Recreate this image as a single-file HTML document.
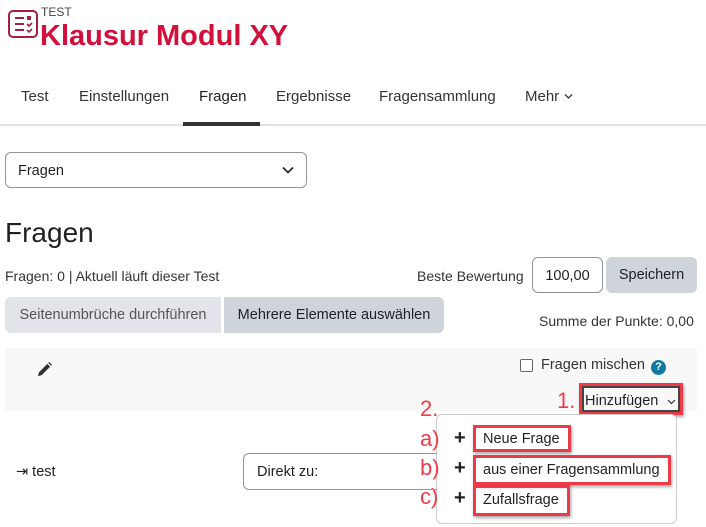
<!DOCTYPE html>
<html><head><meta charset="utf-8"><style>
*{box-sizing:border-box;margin:0;padding:0}
body{width:706px;height:527px;background:#fff;font-family:"Liberation Sans",sans-serif;color:#1d2125;position:relative;overflow:hidden;font-size:14px}
.a{position:absolute;white-space:nowrap}
.red{color:#f23b4a;font-size:22px}
.rb{position:absolute;border:3px solid #ec3b47;box-shadow:1px 2px 3px rgba(0,0,0,.35)}
.pl{position:absolute;font-size:20px;font-weight:bold;color:#222}
</style></head><body>
<svg class="a" style="left:8px;top:10px" width="30" height="28" viewBox="0 0 30 28"><rect x="1" y="1" width="28" height="26" rx="4" fill="none" stroke="#a3213f" stroke-width="2"/><g stroke="#a3213f" stroke-width="2"><line x1="7" y1="8" x2="16" y2="8"/><line x1="7" y1="14" x2="16" y2="14"/><line x1="7" y1="20" x2="16" y2="20"/></g><rect x="19" y="6" width="4" height="4" fill="#a3213f"/><path d="M19 14l2 2 3-3M19 20l2 2 3-3" stroke="#a3213f" stroke-width="1.6" fill="none"/></svg>
<div class="a" style="left:41px;top:5px;font-size:12px;color:#444">TEST</div>
<div class="a" style="left:40px;top:20px;font-size:29px;font-weight:bold;color:#d30f3c">Klausur Modul XY</div>
<div class="a" style="left:21px;top:88px;font-size:15px;color:#333">Test</div>
<div class="a" style="left:79px;top:88px;font-size:15px;color:#333">Einstellungen</div>
<div class="a" style="left:199px;top:88px;font-size:15px;color:#1d2125">Fragen</div>
<div class="a" style="left:276px;top:88px;font-size:15px;color:#333">Ergebnisse</div>
<div class="a" style="left:379px;top:88px;font-size:15px;color:#333">Fragensammlung</div>
<div class="a" style="left:525px;top:88px;font-size:15px;color:#333">Mehr</div>
<svg class="a" style="left:564px;top:93px" width="9" height="7"><path d="M1 1.5l3.5 3.5 3.5-3.5" stroke="#333" stroke-width="1.3" fill="none"/></svg>
<div class="a" style="left:0;top:124px;width:706px;height:2px;background:#dee2e6"></div>
<div class="a" style="left:183px;top:122px;width:77px;height:4px;background:#333"></div>
<div class="a" style="left:5px;top:152px;width:302px;height:36px;border:1px solid #8f959e;border-radius:6px"></div>
<div class="a" style="left:18px;top:163px;font-size:14.5px">Fragen</div>
<svg class="a" style="left:282px;top:166px" width="12" height="8"><path d="M1 1.5l5 5 5-5" stroke="#1d2125" stroke-width="1.6" fill="none"/></svg>
<div class="a" style="left:5px;top:217px;font-size:28px">Fragen</div>
<div class="a" style="left:5px;top:268px;font-size:14px;color:#333">Fragen: 0 | Aktuell läuft dieser Test</div>
<div class="a" style="left:417px;top:268px;font-size:14px;color:#333">Beste Bewertung</div>
<div class="a" style="left:532px;top:257px;width:71px;height:36px;border:1px solid #8f959e;border-radius:6px;text-align:center;line-height:36px;font-size:14.5px">100,00</div>
<div class="a" style="left:606px;top:257px;width:91px;height:36px;background:#ced4da;border-radius:6px;text-align:center;line-height:37px;font-size:14.5px">Speichern</div>
<div class="a" style="left:5px;top:297px;width:216px;height:36px;background:#e1e5e9;border-radius:6px 0 0 6px;text-align:center;line-height:37px;font-size:14.5px;color:#555">Seitenumbrüche durchführen</div>
<div class="a" style="left:224px;top:297px;width:220px;height:36px;background:#ced4da;border-radius:0 6px 6px 0;text-align:center;line-height:37px;font-size:14.5px">Mehrere Elemente auswählen</div>
<div class="a" style="left:539px;top:313px;font-size:14px;color:#333">Summe der Punkte: 0,00</div>
<div class="a" style="left:5px;top:348px;width:692px;height:63px;background:#f8f8f8"></div>
<svg class="a" style="left:37px;top:362px" width="15" height="15" viewBox="0 0 16 16"><path d="M1 15l1-4 9-9 3 3-9 9z M12 1l1-1 3 3-1 1z" fill="#333"/></svg>
<div class="a" style="left:520px;top:359px;width:13px;height:13px;border:1.5px solid #666;border-radius:2px;background:#fff"></div>
<div class="a" style="left:541px;top:357px;font-size:14.5px;color:#333">Fragen mischen</div>
<div class="a" style="left:651px;top:360px;width:15px;height:15px;border-radius:50%;background:#0f7aa0;color:#fff;font-size:11px;font-weight:bold;text-align:center;line-height:15px">?</div>
<div class="a red" style="left:557px;top:388px">1.</div>
<div class="rb" style="left:579px;top:383px;width:104px;height:32px"></div>
<div class="a" style="left:582px;top:386px;width:98px;height:26px;border:2px solid #444"></div>
<div class="a" style="left:585px;top:393px;font-size:14.5px">Hinzufügen</div>
<svg class="a" style="left:667px;top:399px" width="9" height="6"><path d="M1 1l3.5 3.5 3.5-3.5" stroke="#333" stroke-width="1.2" fill="none"/></svg>
<div class="a" style="left:436px;top:414px;width:241px;height:110px;border:1px solid #ccc;border-radius:6px;background:#fff"></div>
<div class="a red" style="left:420px;top:396px">2.</div>
<div class="a red" style="left:420px;top:426px">a)</div>
<div class="a red" style="left:420px;top:455px">b)</div>
<div class="a red" style="left:420px;top:484px">c)</div>
<div class="pl" style="left:454px;top:427px">+</div>
<div class="pl" style="left:454px;top:457px">+</div>
<div class="pl" style="left:454px;top:487px">+</div>
<div class="rb" style="left:473px;top:425px;width:98px;height:27px"></div>
<div class="rb" style="left:473px;top:455px;width:198px;height:30px"></div>
<div class="rb" style="left:473px;top:485px;width:97px;height:31px"></div>
<div class="a" style="left:483px;top:431px;font-size:14.5px">Neue Frage</div>
<div class="a" style="left:483px;top:462px;font-size:14.5px">aus einer Fragensammlung</div>
<div class="a" style="left:483px;top:492px;font-size:14.5px">Zufallsfrage</div>
<div class="a" style="left:243px;top:453px;width:194px;height:37px;border:1px solid #8f959e;border-right:none;border-radius:6px 0 0 6px"></div>
<div class="a" style="left:257px;top:464px;font-size:14.5px">Direkt zu:</div>
<div class="a" style="left:16px;top:464px;font-size:14.5px">⇥ test</div>
</body></html>
